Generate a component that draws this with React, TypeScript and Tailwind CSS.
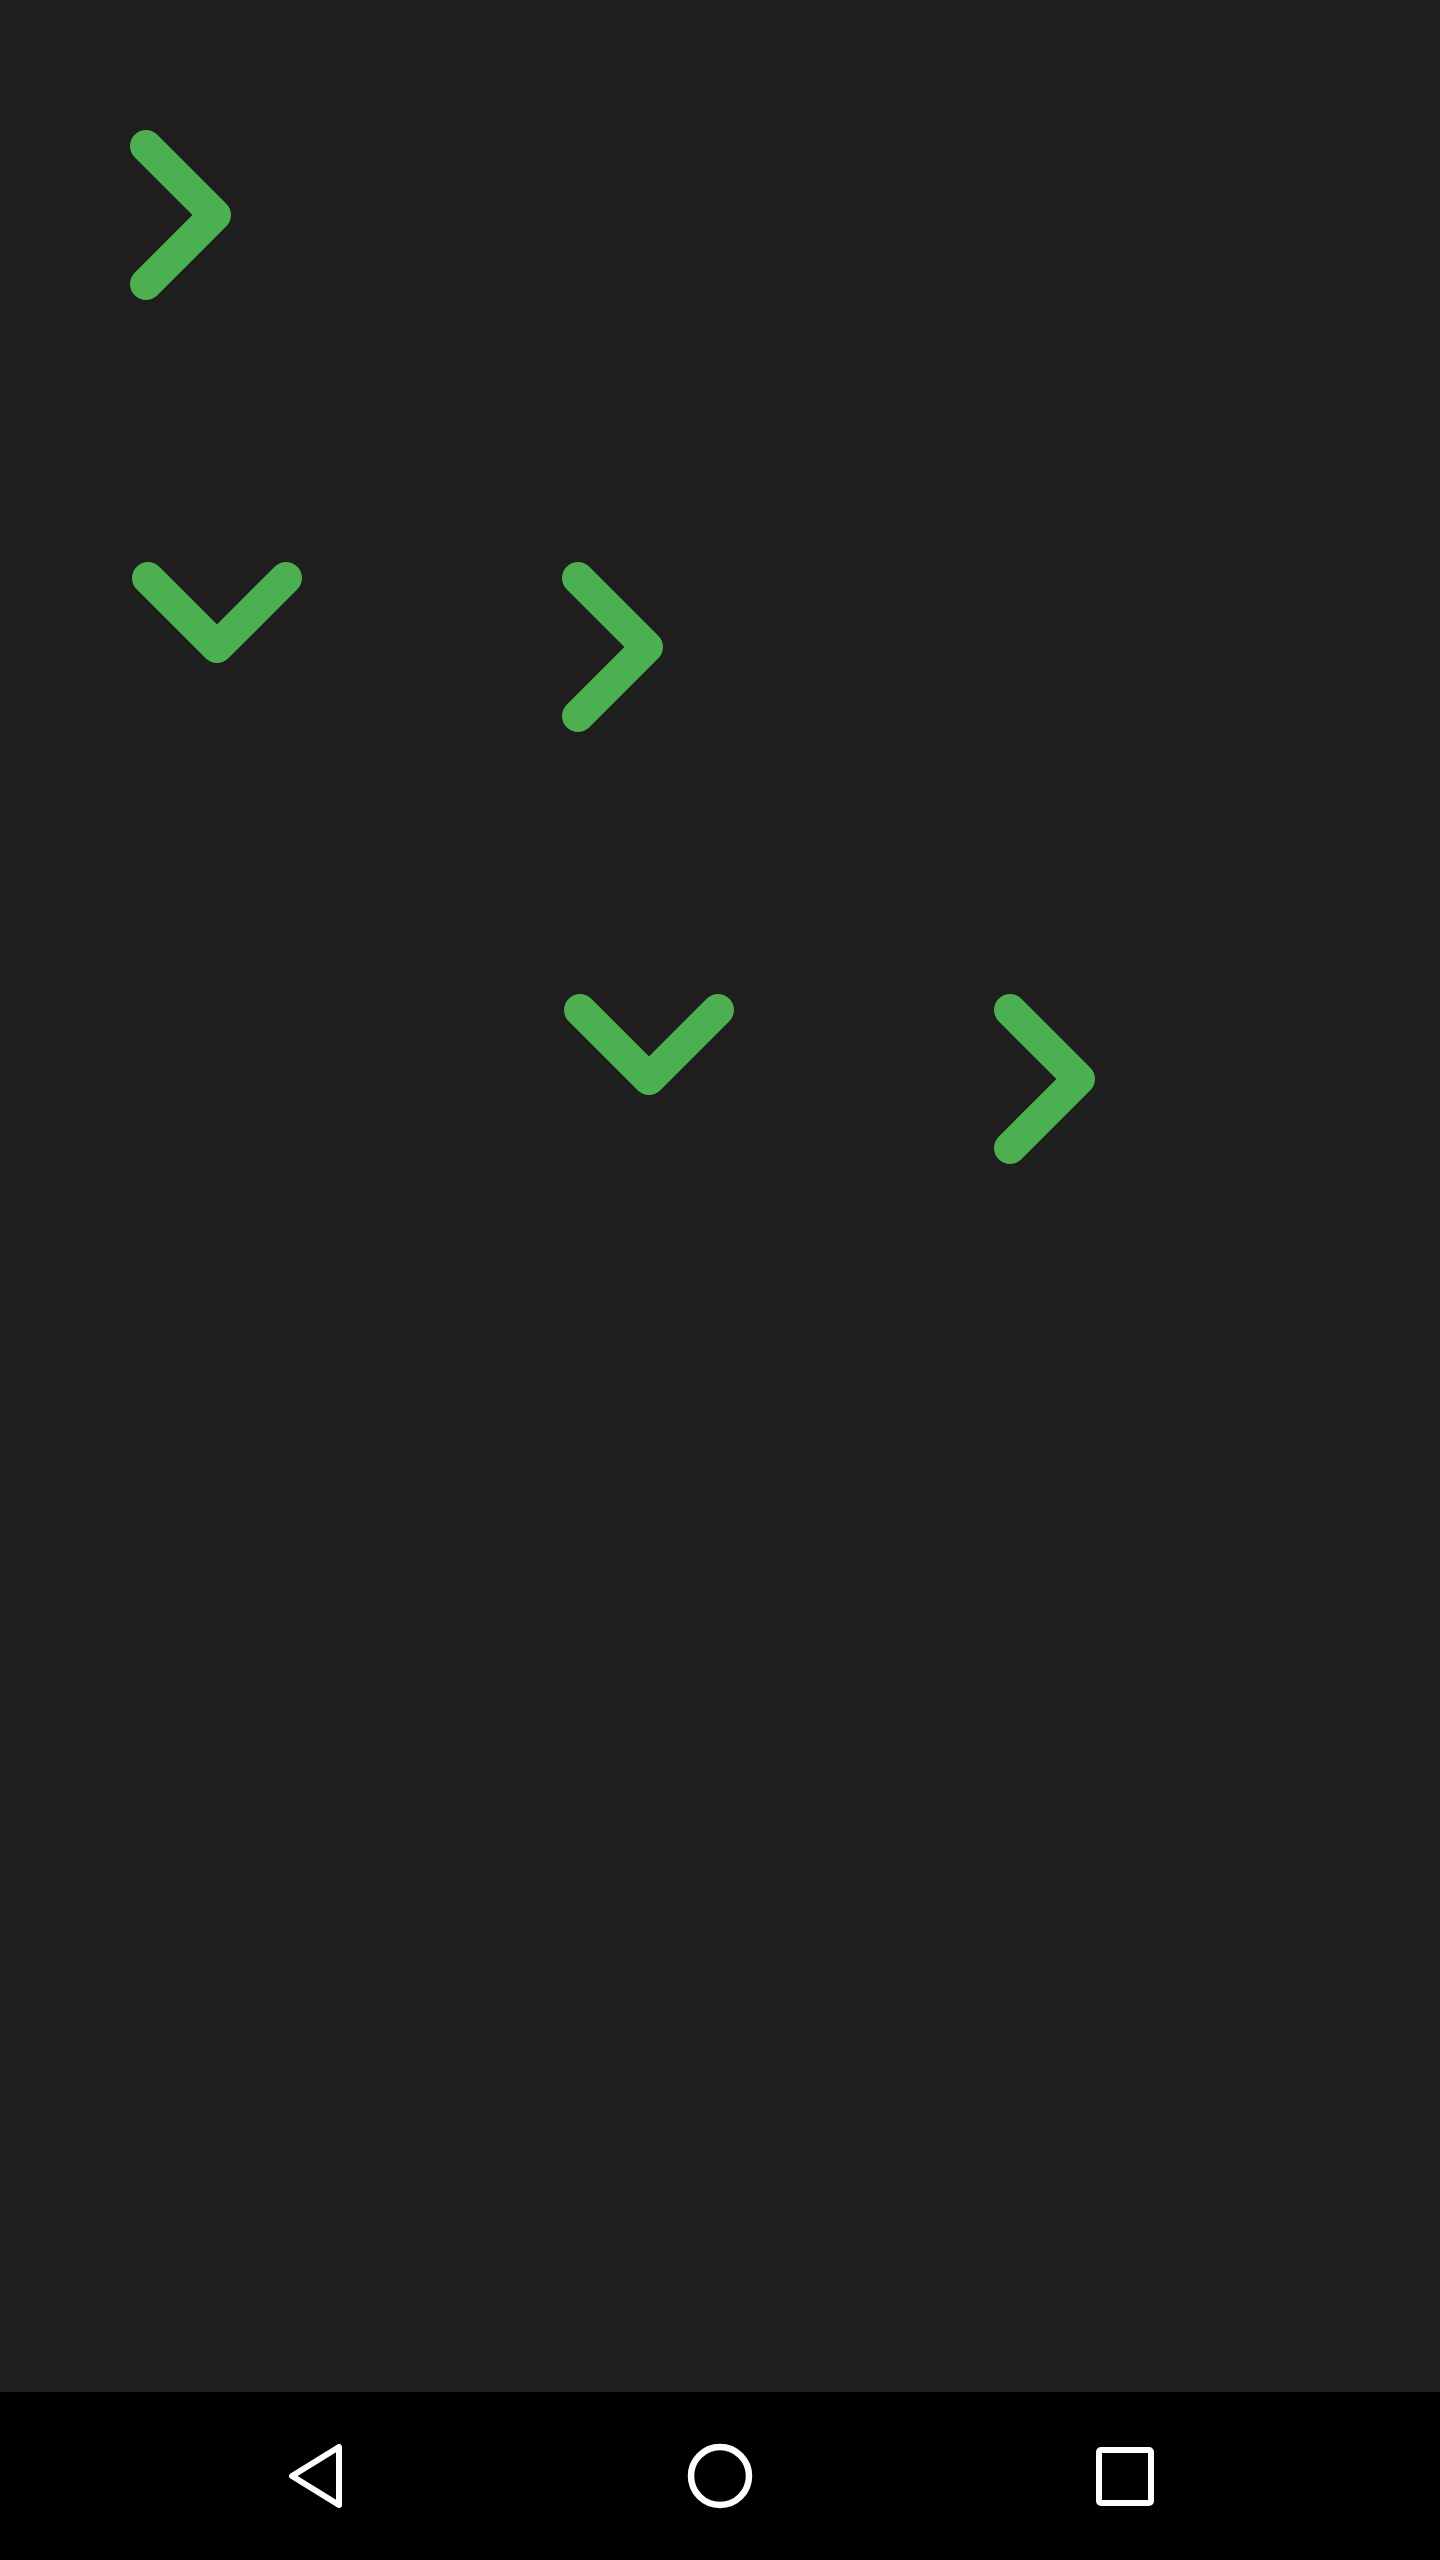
import React from "react";

function Chevron({ down = false }: { down?: boolean }) {
  return (
    <div className="w-[432px] h-[432px] shrink-0 flex items-center justify-center">
      <svg width="432" height="432" viewBox="0 0 432 432" className={down ? "rotate-90" : ""}>
        <polyline
          points="146,146 215,215 146,284"
          fill="none"
          stroke="#4caf50"
          strokeWidth="32"
          strokeLinecap="round"
          strokeLinejoin="round"
        />
      </svg>
    </div>
  );
}

function Empty() {
  return <div className="w-[432px] h-[432px] shrink-0" />;
}

export default function App() {
  const rows: Array<Array<"r" | "d" | "e">> = [
    ["r"],
    ["d", "r"],
    ["e", "d", "r"],
  ];
  return (
    <div className="w-[1440px] h-[2560px] flex flex-col bg-[#1e1e1e] overflow-hidden">
      <div className="flex-1 flex flex-col">
        {rows.map((row, i) => (
          <div key={i} className="flex">
            {row.map((c, j) =>
              c === "e" ? <Empty key={j} /> : <Chevron key={j} down={c === "d"} />
            )}
          </div>
        ))}
      </div>
      <div className="h-[168px] bg-black flex items-center justify-center gap-[309px]">
        <div className="w-[96px] h-[96px]">
          <svg width="96" height="96" viewBox="0 0 96 96">
            <polygon points="25,48 72,19 72,77" fill="none" stroke="#ffffff" strokeWidth="6" strokeLinejoin="round" />
          </svg>
        </div>
        <div className="w-[96px] h-[96px]">
          <svg width="96" height="96" viewBox="0 0 96 96">
            <circle cx="48" cy="48" r="29" fill="none" stroke="#ffffff" strokeWidth="6.5" />
          </svg>
        </div>
        <div className="w-[96px] h-[96px]">
          <svg width="96" height="96" viewBox="0 0 96 96">
            <rect x="22" y="22" width="52" height="53" rx="2" fill="none" stroke="#ffffff" strokeWidth="6" />
          </svg>
        </div>
      </div>
    </div>
  );
}
